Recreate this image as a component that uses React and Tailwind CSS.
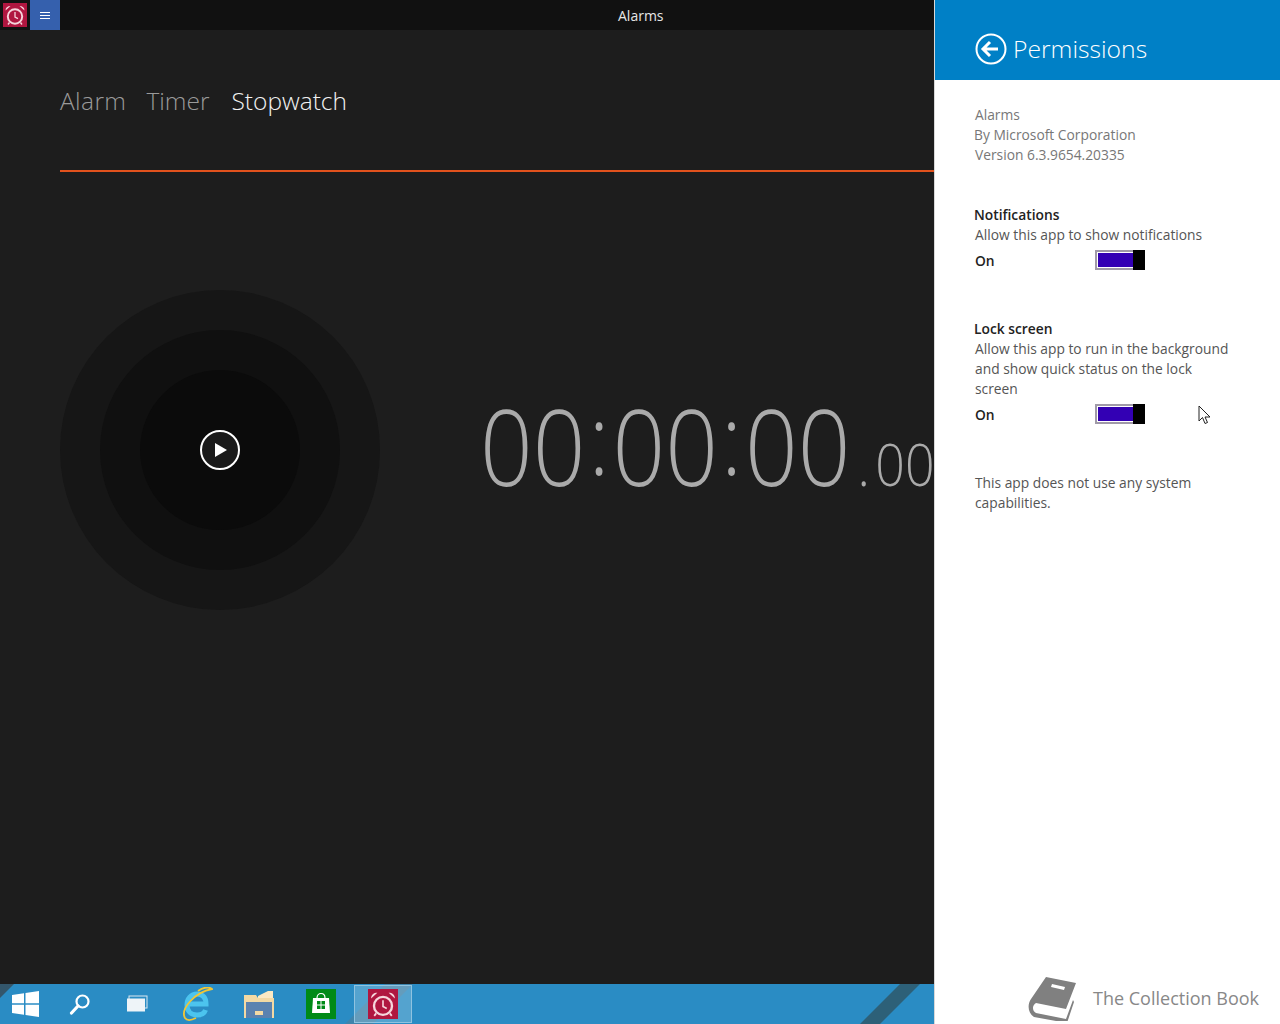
import React from "react";

const font = { fontFamily: '"Open Sans", "Noto Sans", sans-serif' };

function AlarmIcon({ size = 24 }) {
  return (
    <svg width={size} height={size} viewBox="0 0 24 24" fill="none" stroke="#f6d5dc" strokeWidth="1.9">
      <rect width="24" height="24" fill="#b01640" stroke="none" />
      <circle cx="12" cy="13.500" r="7.200" />
      <path d="M12 9v5l3 1.600" strokeWidth="1.300" />
      <path d="M2.500 7.500c0-3 2-4.500 5-4.500zM21.500 7.500c0-3-2-4.500-5-4.500z" fill="#f6d5dc" stroke="none" />
      <path d="M6.500 19.500 5 21.500M17.500 19.500l1.500 2" strokeWidth="1.400" />
    </svg>
  );
}

function TopBar() {
  return (
    <div className="relative flex h-[30px] items-start bg-[#111111]">
      <div className="mt-[3px] ml-[3px] flex h-[24px] w-[24px]"><AlarmIcon /></div>
      <div className="ml-[3px] flex h-[30px] w-[30px] flex-col items-center justify-center gap-[2px] bg-[#3560ad]">
        <span className="h-px w-[10px] bg-white" />
        <span className="h-px w-[10px] bg-white" />
        <span className="h-px w-[10px] bg-white" />
      </div>
      <div className="ml-[558px] text-[14px] leading-[31px] text-[#e6e6e6]">Alarms</div>
    </div>
  );
}

function Tabs() {
  return (
    <div className="ml-[60px] flex h-[142px] items-start gap-[22px] border-b-2 border-[#e2521d] pt-[51px] text-[24.500px] leading-[40px] font-light">
      <span className="-mr-[2px] tracking-[0.4px] text-[#9a9a9a]">Alarm</span>
      <span className="text-[#9a9a9a]">Timer</span>
      <span className="text-[#f2f2f2]">Stopwatch</span>
    </div>
  );
}

function Dial() {
  return (
    <div className="flex h-[320px] w-[320px] shrink-0 items-center justify-center rounded-full bg-[#161616]">
      <div className="flex h-[240px] w-[240px] items-center justify-center rounded-full bg-[#101010]">
        <div className="flex h-[160px] w-[160px] items-center justify-center rounded-full bg-[#0b0b0b]">
          <div className="flex h-[40px] w-[40px] items-center justify-center rounded-full border-2 border-white bg-[#1a1a1a]">
            <svg width="14" height="16" viewBox="0 0 14 16" className="ml-[2px]">
              <path d="M1 1v14l12-7z" fill="#fff" />
            </svg>
          </div>
        </div>
      </div>
    </div>
  );
}

function Colon() {
  return <span className="mx-[3.700px] inline-block -translate-y-[11px] text-[98px] leading-[120px]">:</span>;
}

function Clock() {
  return (
    <div className="ml-[100px] flex origin-left scale-x-[0.88] items-baseline whitespace-nowrap font-light text-[#aaaaaa]">
      <span className="text-[105px] leading-[120px]">00</span>
      <Colon />
      <span className="text-[105px] leading-[120px]">00</span>
      <Colon />
      <span className="text-[105px] leading-[120px]">00</span>
      <span className="ml-[8px] text-[59px] leading-[120px]">.</span>
      <span className="ml-[6px] text-[59px] leading-[120px]">00</span>
    </div>
  );
}

function Taskbar() {
  return (
    <div className="relative flex h-[40px] shrink-0 items-center overflow-hidden bg-[#2a8cc4]">
      <svg width="934" height="40" className="absolute top-0 left-0">
        <path d="M0 14 14 0H0z" fill="#33566b" />
        <path d="M345 40 385 0h28l-40 40z" fill="#4d7f9d" opacity="0.6" />
        <path d="M860 40 900 0h20l-40 40z" fill="#2d6078" />
      </svg>
      <div className="relative flex h-[40px] w-[50px] items-center justify-center">
        <svg width="27" height="26" viewBox="0 0 27 26">
          <path d="M0 4 12 2.200v10H0zM13.500 2 27 0v12.200H13.500zM0 13.800h12v10L0 22zM13.500 13.800H27V26l-13.500-2z" fill="#fff" />
        </svg>
      </div>
      <div className="relative flex h-[40px] w-[60px] items-center justify-center">
        <svg width="22" height="22" viewBox="0 0 22 22" fill="none" stroke="#fff">
          <circle cx="13.500" cy="8.500" r="6" strokeWidth="2.200" />
          <path d="M9 13 2.500 20" strokeWidth="3.200" strokeLinecap="round" />
        </svg>
      </div>
      <div className="relative flex h-[40px] w-[54px] items-center justify-center">
        <svg width="22" height="18" viewBox="0 0 22 18">
          <rect x="3" y="1" width="18" height="12" fill="none" stroke="#dbe8f0" />
          <rect x="1" y="3.500" width="18" height="13" fill="#eef4f8" />
        </svg>
      </div>
      <div className="relative flex h-[40px] w-[66px] items-center justify-center">
        <svg width="32" height="34" viewBox="0 0 32 34" fill="none">
          <path d="M8 17h17c0-6-3-10-9-10s-10 5-10 11 4 10 10 10c4 0 7.500-2 8.500-5" stroke="#4cc4ee" strokeWidth="5" />
          <path d="M4 31C-1 22 14 5 31 2c-4-3-10-1-14 2M4 31c2 3 7 2 11 0" stroke="#f0c636" strokeWidth="1.800" />
        </svg>
      </div>
      <div className="relative flex h-[40px] w-[58px] items-center justify-center">
        <svg width="30" height="28" viewBox="0 0 30 28">
          <path d="M0 5h12l2 3h16v20H0z" fill="#f3d9a4" />
          <path d="M14 6 24 1h5v7H14z" fill="#fbe9c4" />
          <rect x="2" y="12" width="26" height="16" fill="#5b82b0" />
          <rect x="11" y="21" width="8" height="4" fill="#f3d9a4" />
        </svg>
      </div>
      <div className="relative flex h-[40px] w-[65px] items-center justify-center">
        <svg width="30" height="30" viewBox="0 0 30 30">
          <rect width="30" height="30" fill="#008a17" />
          <path d="M11 9c0-6 8-6 8 0" fill="none" stroke="#fff" strokeWidth="1.200" />
          <path d="M7 9h16l1 15H6z" fill="#fff" />
          <path d="M11 12h3.500v3.500H11zM15.500 12H19v3.500h-3.500zM11 16.500h3.500V20H11zM15.500 16.500H19V20h-3.500z" fill="#008a17" />
        </svg>
      </div>
      <div className="relative ml-[1px] flex h-[38px] w-[58px] items-center justify-center border border-[#8fc3e0] bg-[#ffffff33]">
        <AlarmIcon size={30} />
      </div>
    </div>
  );
}

function Toggle() {
  return (
    <div className="flex h-[20px] w-[50px]">
      <div className="h-[20px] w-[38px] border-2 border-r-0 border-[#a09aa8]">
        <div className="h-full border border-r-0 border-white bg-[#3300b4]" />
      </div>
      <div className="h-[20px] w-[12px] bg-black" />
    </div>
  );
}

function Setting({ title, text, width }) {
  return (
    <div className="text-[13.800px] leading-[20px] text-[#555555]">
      <div className="-ml-px font-semibold text-[#222222]">{title}</div>
      <div className={width}>{text}</div>
      <div className="mt-[5px] flex h-[20px] items-center">
        <span className="w-[120px] pt-[2px] font-semibold text-[#222222]">On</span>
        <Toggle />
      </div>
    </div>
  );
}

function Panel() {
  return (
    <div className="relative flex h-[1024px] w-[346px] shrink-0 flex-col border-l border-[#d8d8d8] bg-white">
      <div className="flex h-[80px] items-center bg-[#0080c6] pt-[18px] pl-[40px] text-white">
        <svg width="32" height="32" viewBox="0 0 32 32" fill="none" stroke="#fff">
          <circle cx="16" cy="16" r="14.500" strokeWidth="2" />
          <path d="M8 16h15M15 9l-7 7 7 7" strokeWidth="3" />
        </svg>
        <span className="ml-[6px] text-[24.700px] leading-[40px] font-light">Permissions</span>
      </div>
      <div className="px-[40px] pt-[25px]">
        <div className="text-[13.800px] leading-[20px] text-[#777777]">
          <div>Alarms</div>
          <div className="-ml-px">By Microsoft Corporation</div>
          <div>Version 6.3.9654.20335</div>
        </div>
        <div className="mt-[40px]">
          <Setting title="Notifications" text="Allow this app to show notifications" />
        </div>
        <div className="mt-[49px]">
          <Setting
            title="Lock screen"
            text="Allow this app to run in the background and show quick status on the lock screen"
            width="w-[262px]"
          />
        </div>
        <div className="mt-[49px] w-[250px] text-[13.800px] leading-[20px] text-[#555555]">
          This app does not use any system capabilities.
        </div>
      </div>
      <div className="mt-auto flex h-[50px] items-center justify-end gap-[13px] pr-[21px] pb-[2px]">
        <svg width="52" height="46" viewBox="0 0 52 46">
          <path d="M18 2 48 8 38 34 8 28c-4 2-4 8 0 10l30 6 7-19 1 2-7 21L6 42C0 38-1 30 3 24z" fill="#808080" />
          <path d="M24 9l13 3-1 3-13-3z" fill="#fff" />
          <path d="M7 31l29 6-1 4-28-6c-2-1-2-3 0-4z" fill="#fff" />
        </svg>
        <span className="text-[18px] leading-[26px] text-[#888888]">The Collection Book</span>
      </div>
      {/* mouse pointer */}
      <svg width="13" height="20" viewBox="0 0 13 20" className="absolute top-[405px] left-[263px]">
        <path d="M1 1v15l3.500-3.500L7 18.500l2.500-1L7 12h5z" fill="#fff" stroke="#222" strokeWidth="1" />
      </svg>
    </div>
  );
}

export default function App() {
  return (
    <div className="flex h-[1024px] w-[1280px] overflow-hidden" style={font}>
      <div className="flex w-[934px] shrink-0 flex-col bg-[#1d1d1d]">
        <TopBar />
        <Tabs />
        <div className="flex flex-1 items-start overflow-hidden pt-[118px] pl-[60px]">
          <Dial />
          <div className="mt-[96px]"><Clock /></div>
        </div>
        <Taskbar />
      </div>
      <Panel />
    </div>
  );
}
